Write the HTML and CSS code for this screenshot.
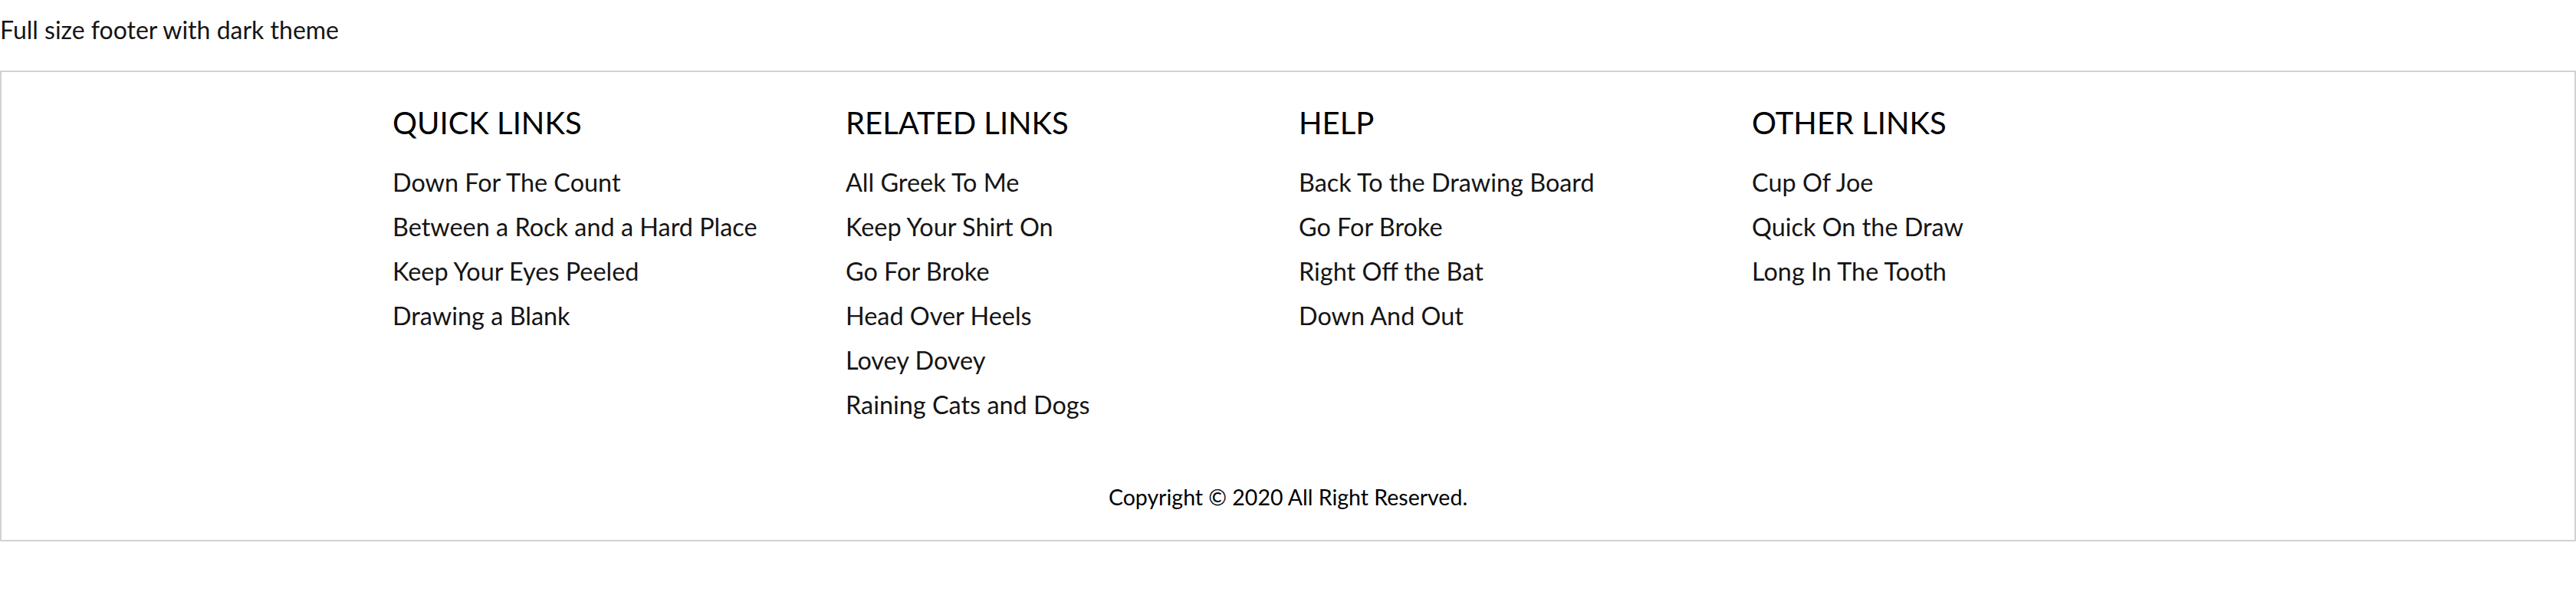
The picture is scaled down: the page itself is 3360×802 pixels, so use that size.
FILE: index.html
```html
<!DOCTYPE html>
<html lang="en">
<head>
<meta charset="utf-8">
<title>Full size footer</title>
<link rel="stylesheet" href="styles.css">
</head>
<body>
<h1 class="page-title">Full size footer with dark theme</h1>
<footer class="footer">
  <div class="cols">
    <div class="col">
      <h2 class="col-title">QUICK LINKS</h2>
      <ul class="links">
        <li><a href="#">Down For The Count</a></li>
        <li><a href="#">Between a Rock and a Hard Place</a></li>
        <li><a href="#">Keep Your Eyes Peeled</a></li>
        <li><a href="#">Drawing a Blank</a></li>
      </ul>
    </div>
    <div class="col">
      <h2 class="col-title">RELATED LINKS</h2>
      <ul class="links">
        <li><a href="#">All Greek To Me</a></li>
        <li><a href="#">Keep Your Shirt On</a></li>
        <li><a href="#">Go For Broke</a></li>
        <li><a href="#">Head Over Heels</a></li>
        <li><a href="#">Lovey Dovey</a></li>
        <li><a href="#">Raining Cats and Dogs</a></li>
      </ul>
    </div>
    <div class="col">
      <h2 class="col-title">HELP</h2>
      <ul class="links">
        <li><a href="#">Back To the Drawing Board</a></li>
        <li><a href="#">Go For Broke</a></li>
        <li><a href="#">Right Off the Bat</a></li>
        <li><a href="#">Down And Out</a></li>
      </ul>
    </div>
    <div class="col">
      <h2 class="col-title">OTHER LINKS</h2>
      <ul class="links">
        <li><a href="#">Cup Of Joe</a></li>
        <li><a href="#">Quick On the Draw</a></li>
        <li><a href="#">Long In The Tooth</a></li>
      </ul>
    </div>
  </div>
  <p class="copyright">Copyright © 2020 All Right Reserved.</p>
</footer>
</body>
</html>
```
FILE: styles.css
```css
html, body {
  margin: 0;
  padding: 0;
  background: #fff;
  color: #151515;
  font-family: Lato, "Open Sans", sans-serif;
}

.page-title {
  margin: 20px 0 34px;
  font-size: 32px;
  line-height: 38px;
  font-weight: 400;
}

.footer {
  border: 2px solid #d2d2d2;
  background: #fff;
  padding: 45px 0 36px;
}

.cols {
  display: grid;
  grid-template-columns: repeat(4, 591px);
  justify-content: center;
}

.col {
  padding-left: 14px;
}

.col-title {
  margin: 0 0 27px;
  font-size: 40px;
  line-height: 43px;
  font-weight: 400;
  color: #000;
}

.links {
  list-style: none;
  margin: 0;
  padding: 0;
}

.links li {
  line-height: 58px;
  font-size: 32.4px;
}

.links a {
  color: #151515;
  text-decoration: none;
}

.copyright {
  margin: 71px 0 0;
  text-align: center;
  font-size: 28.5px;
  line-height: 40px;
  color: #000;
}
```
